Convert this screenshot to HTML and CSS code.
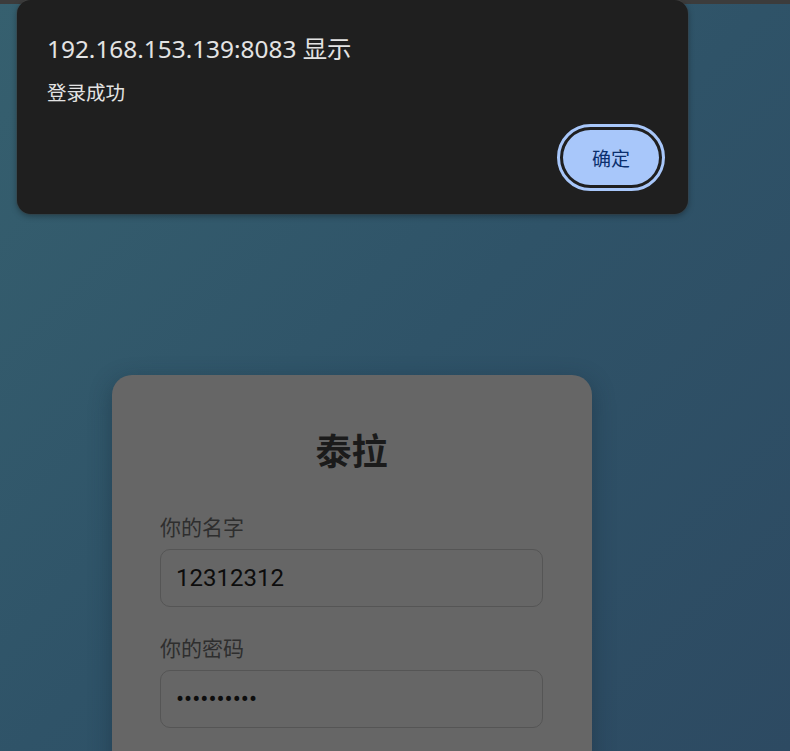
FILE: index.html
```html
<!DOCTYPE html>
<html lang="zh-CN">
<head>
<meta charset="utf-8">
<title>泰拉</title>
<link rel="stylesheet" href="styles.css">
</head>
<body>
<div class="topbar"></div>
<main class="page">
  <form class="card">
    <h1 class="title">泰拉</h1>
    <label class="label" for="name">你的名字</label>
    <input class="field" id="name" type="text" value="12312312">
    <label class="label label-gap" for="pwd">你的密码</label>
    <input class="field" id="pwd" type="password" value="1234567890">
  </form>
</main>
<div class="alert" role="dialog">
  <div class="alert-title">192.168.153.139:8083 显示</div>
  <div class="alert-msg">登录成功</div>
  <div class="alert-actions">
    <button class="alert-btn" type="button">确定</button>
  </div>
</div>
</body>
</html>
```
FILE: styles.css
```css
html, body {
  margin: 0;
  padding: 0;
}
body {
  width: 790px;
  height: 751px;
  overflow: hidden;
  background: linear-gradient(135deg, #36606f 0%, #2f5368 50%, #2d4a62 100%);
  font-family: "Noto Sans", "Noto Sans CJK SC", sans-serif;
  position: relative;
}
.topbar {
  height: 4px;
  background: #3c3c3c;
}
.page {
  padding: 371px 0 0 112px;
}
.card {
  width: 480px;
  box-sizing: border-box;
  padding: 52px 49px 60px 48px;
  background: #666666;
  border-radius: 20px;
  box-shadow: 0 6px 22px rgba(20, 40, 55, 0.45);
  display: flex;
  flex-direction: column;
}
.title {
  margin: 0 0 41px;
  font-size: 36px;
  line-height: 44px;
  font-weight: 700;
  text-align: center;
  color: #1b1b1b;
  font-family: "Noto Sans CJK SC", sans-serif;
}
.label {
  font-size: 21px;
  line-height: 28px;
  color: #2e2e2e;
  font-family: "Noto Sans CJK SC", sans-serif;
  margin-bottom: 9px;
}
.label-gap {
  margin-top: 26px;
}
.field {
  height: 58px;
  box-sizing: border-box;
  border: 1px solid #555555;
  border-radius: 10px;
  background: transparent;
  padding: 0 15px;
  font-family: Roboto, sans-serif;
  font-size: 24px;
  color: #0d0d0d;
  outline: none;
}
.alert {
  position: absolute;
  left: 17px;
  top: 0;
  width: 671px;
  height: 214px;
  box-sizing: border-box;
  padding: 33px 29px 29px 30px;
  background: #1f1f1f;
  border-radius: 14px;
  box-shadow: 0 2px 6px rgba(0, 0, 0, 0.35), 0 0 0 1px rgba(80, 80, 80, 0.35);
  display: flex;
  flex-direction: column;
  color: #e3e3e3;
}
.alert-title {
  font-size: 24.4px;
  line-height: 32px;
}
.alert-msg {
  margin-top: 14px;
  font-size: 19.5px;
  line-height: 26px;
  font-family: "Noto Sans CJK SC", sans-serif;
}
.alert-actions {
  margin-top: auto;
  display: flex;
  justify-content: flex-end;
}
.alert-btn {
  width: 96px;
  height: 55px;
  border: none;
  border-radius: 28px;
  background: #a8c7fa;
  color: #0b2f6d;
  font-size: 19px;
  font-family: "Noto Sans CJK SC", sans-serif;
  outline: 3px solid #a8c7fa;
  outline-offset: 3px;
}
```
